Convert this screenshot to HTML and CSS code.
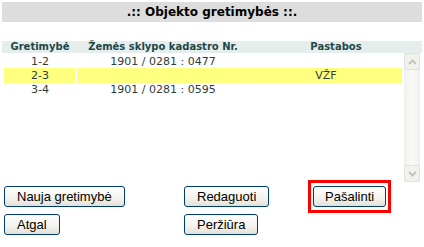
FILE: index.html
```html
<!DOCTYPE html>
<html lang="lt">
<head>
  <meta charset="UTF-8" />
  <title>Objekto gretimybės</title>
  <link rel="stylesheet" href="styles.css">
</head>
<body>
  <div class="title-bar">.:: Objekto gretimybės ::.</div>

  <div class="list">
    <div class="list-head">
      <div>Gretimybė</div>
      <div>Žemės sklypo kadastro Nr.</div>
      <div>Pastabos</div>
    </div>
    <div class="list-body">
      <div class="rows">
        <div class="row">
          <div>1-2</div>
          <div>1901 / 0281 : 0477</div>
          <div></div>
        </div>
        <div class="row selected">
          <div>2-3</div>
          <div></div>
          <div>VŽF</div>
        </div>
        <div class="row">
          <div>3-4</div>
          <div>1901 / 0281 : 0595</div>
          <div></div>
        </div>
      </div>
      <div class="scroll">
        <div class="scroll-btn">
          <svg width="9" height="6" viewBox="0 0 9 6"><path d="M1 5 L4.5 1.5 L8 5" fill="none" stroke="#c4c4bc" stroke-width="2"/></svg>
        </div>
        <div class="scroll-track"></div>
        <div class="scroll-btn">
          <svg width="9" height="6" viewBox="0 0 9 6"><path d="M1 1 L4.5 4.5 L8 1" fill="none" stroke="#c4c4bc" stroke-width="2"/></svg>
        </div>
      </div>
    </div>
  </div>

  <div class="actions">
    <div><button class="btn">Nauja gretimybė</button></div>
    <div><button class="btn">Redaguoti</button></div>
    <div class="highlight"><button class="btn">Pašalinti</button></div>
    <div><button class="btn">Atgal</button></div>
    <div><button class="btn">Peržiūra</button></div>
  </div>
</body>
</html>
```

FILE: styles.css
```css
body {
  margin: 0;
  padding: 2px;
  background: #fff;
  font-family: "DejaVu Sans", Verdana, sans-serif;
}
.title-bar {
  height: 20px;
  line-height: 21px;
  background: #dddddd;
  text-align: center;
  font-size: 12px;
  font-weight: bold;
  color: #000;
  margin-bottom: 19px;
}
.list-head {
  display: grid;
  grid-template-columns: 72px 172px 1fr;
  column-gap: 1px;
  padding-left: 2px;
  height: 12px;
  line-height: 12px;
  background: #e5eded;
  font-size: 10px;
  font-weight: bold;
  color: #1e4848;
  text-align: center;
}
.list-body {
  display: flex;
  gap: 2px;
  height: 129px;
  padding-left: 2px;
}
.rows {
  width: 398px;
  padding-top: 1px;
}
.row {
  display: grid;
  grid-template-columns: 72px 172px 1fr;
  column-gap: 1px;
  height: 14px;
  line-height: 15px;
  font-size: 11px;
  color: #2e3c3c;
  text-align: center;
}
.row.selected div {
  background: #ffff80;
}
.scroll {
  width: 16px;
  display: flex;
  flex-direction: column;
  background: linear-gradient(90deg, #f1f1ec, #fafaf7 50%, #efefea);
}
.scroll-btn {
  height: 15px;
  border: 1px solid #e2e2da;
  border-radius: 2px;
  background: #f2f2ed;
  display: flex;
  align-items: center;
  justify-content: center;
}
.scroll-track {
  flex: 1;
}
.actions {
  display: grid;
  grid-template-columns: 180px 129px auto;
  row-gap: 7px;
  padding: 4px 0 0 2px;
}
.btn {
  font-family: "Liberation Sans", Arial, sans-serif;
  font-size: 13px;
  height: 21px;
  padding: 0 12px;
  border: 1px solid #003c74;
  border-radius: 3px;
  background: linear-gradient(#ffffff, #f3f2ec 60%, #e3e1d6);
  color: #000;
}
.highlight {
  justify-self: start;
  border: 3px solid #ff0000;
  padding: 3px 2px;
  margin: -6px 0 -6px -5px;
}
.highlight .btn {
  display: block;
  padding: 0 11px;
}
```
